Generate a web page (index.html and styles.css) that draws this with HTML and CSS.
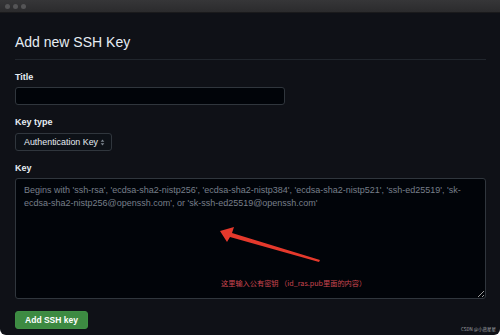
FILE: index.html
```html
<!DOCTYPE html>
<html>
<head>
<meta charset="utf-8">
<link rel="stylesheet" href="styles.css">
</head>
<body>
<div class="window">
  <div class="titlebar">
    <span class="dot"></span><span class="dot"></span><span class="dot"></span>
  </div>
  <div class="content">
    <h1 class="heading">Add new SSH Key</h1>
    <div class="field field-title">
      <label class="label">Title</label>
      <input class="input" type="text">
    </div>
    <div class="field field-type">
      <label class="label">Key type</label>
      <div class="select">Authentication Key
        <svg class="updown" width="5" height="7" viewBox="0 0 6 8"><path d="M3 0.5 L5.2 3 H0.8 Z M3 7.5 L5.2 5 H0.8 Z" fill="#7d8590"/></svg>
      </div>
    </div>
    <div class="field field-key">
      <label class="label">Key</label>
      <div class="keybox">
        <textarea class="textarea" placeholder="Begins with 'ssh-rsa', 'ecdsa-sha2-nistp256', 'ecdsa-sha2-nistp384', 'ecdsa-sha2-nistp521', 'ssh-ed25519', 'sk-ecdsa-sha2-nistp256@openssh.com', or 'sk-ssh-ed25519@openssh.com'"></textarea>
        <svg class="arrow" width="120" height="50" viewBox="0 0 120 50"><polygon points="0,14 14,10 12,16 100,43 99,45 10,20 7,25" fill="#e5392c"/></svg>
        <div class="note">这里输入公有密钥 （id_ras.pub里面的内容）</div>
      </div>
    </div>
    <div class="actions">
      <button class="btn">Add SSH key</button>
    </div>
  </div>
  <div class="watermark">CSDN @小燕星星</div>
</div>
</body>
</html>
```
FILE: styles.css
```css
* { box-sizing: border-box; }
html, body { margin: 0; padding: 0; background: #ffffff; }
body { width: 500px; height: 335px; overflow: hidden; font-family: "Liberation Sans", Arial, "Noto Sans CJK SC", sans-serif; }
.window {
  position: relative;
  width: 500px;
  height: 335px;
  background: #0f1117;
  border-radius: 0 0 6px 6px;
  display: flex;
  flex-direction: column;
  overflow: hidden;
}
.titlebar {
  height: 13px;
  flex: none;
  background: linear-gradient(#363638, #2b2b2d);
  border-bottom: 1px solid #1a1a1c;
  display: flex;
  align-items: center;
  gap: 3px;
  padding-left: 5px;
}
.dot { width: 5px; height: 5px; border-radius: 50%; background: #545456; }
.content { padding: 0 14px 0 15px; display: flex; flex-direction: column; }
.heading {
  margin: 21px 0 0;
  font-size: 14px;
  line-height: 17px;
  font-weight: 400;
  color: #e6edf3;
  padding-bottom: 8px;
  border-bottom: 1px solid #21262d;
}
.field { display: flex; flex-direction: column; align-items: flex-start; }
.label { font-size: 9px; font-weight: 700; color: #e6edf3; line-height: 12px; margin-top: 11px; margin-bottom: 4px; }
.field-type .label { margin-bottom: 5px; }
.input {
  width: 270px; height: 18px;
  background: #010409;
  border: 1px solid #30363d;
  border-radius: 3px;
  outline: none;
}
.select {
  width: 97px;
  height: 18px;
  padding: 0 6px 0 8px;
  display: flex; align-items: center; justify-content: space-between;
  font-size: 8.9px; color: #e6edf3;
  background: #0d1117;
  border: 1px solid #30363d;
  border-radius: 3px;
}
.keybox { position: relative; width: 471px; }
.textarea {
  display: block;
  width: 471px; height: 121px;
  background: #010409;
  border: 1px solid #30363d;
  border-radius: 3px;
  padding: 5px 8px;
  font-family: "Liberation Sans", Arial, sans-serif;
  font-size: 9px;
  line-height: 13px;
  color: #e6edf3;
  resize: both;
  outline: none;
}
.textarea::placeholder { color: #777f89; }
.arrow { position: absolute; left: 205px; top: 39px; }
.note {
  position: absolute; left: 206px; top: 100px;
  font-size: 7.2px; color: #cc4650; white-space: nowrap;
  font-family: "Noto Sans CJK SC", sans-serif;
}
.actions { margin-top: 10px; }
.btn {
  height: 18px; width: 73px; padding: 0;
  background: #3d8a42;
  border: 1px solid #3f8f44;
  border-radius: 3px;
  color: #ffffff;
  font-family: "Liberation Sans", Arial, sans-serif;
  font-size: 8.5px; font-weight: 700;
}
.watermark {
  position: absolute; right: 4px; bottom: 3px;
  font-size: 4.5px; color: #a0a4aa;
  font-family: "Noto Sans CJK SC", sans-serif;
}
```
